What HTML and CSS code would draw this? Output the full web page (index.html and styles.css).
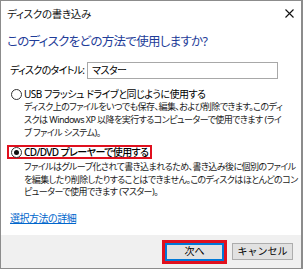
FILE: index.html
```html
<!DOCTYPE html>
<html lang="ja">
<head>
<meta charset="utf-8">
<link rel="stylesheet" href="styles.css">
</head>
<body>
<div class="window">
  <div class="titlebar">
    <span class="title">ディスクの書き込み</span>
    <svg class="close" width="9" height="9" viewBox="0 0 9 9"><path d="M0.5 0.5 L8.5 8.5 M8.5 0.5 L0.5 8.5" stroke="#111" stroke-width="1.1" fill="none"/></svg>
  </div>
  <div class="content">
    <h1 class="heading">このディスクをどの方法で使用しますか?</h1>
    <div class="title-row">
      <span class="field-label">ディスクのタイトル:</span>
      <div class="field">マスター</div>
    </div>
    <div class="option">
      <div class="option-head">
        <span class="radio"></span>
        <span class="option-label usb">USB フラッシュ ドライブと同じように使用する</span>
      </div>
      <p class="desc">ディスク上のファイルをいつでも保存、編集、および削除できます。このディ<br>スクは Windows XP 以降を実行するコンピューターで使用できます (ライ<br>ブ ファイル システム)。</p>
    </div>
    <div class="option option-second">
      <div class="option-head selected">
        <span class="radio checked"></span>
        <span class="option-label cd">CD/DVD プレーヤーで使用する</span>
      </div>
      <p class="desc desc-second">ファイルはグループ化されて書き込まれるため、書き込み後に個別のファイル<br>を編集したり削除したりすることはできません。このディスクはほとんどのコン<br>ピューターで使用できます (マスター)。</p>
    </div>
    <a class="link" href="#">選択方法の詳細</a>
  </div>
  <div class="footer">
    <div class="highlight"><button class="btn primary">次へ</button></div>
    <button class="btn cancel">キャンセル</button>
  </div>
</div>
</body>
</html>
```
FILE: styles.css
```css
html, body {
  margin: 0;
  padding: 0;
  background: #fff;
}
body {
  font-family: "Noto Sans", "Noto Sans CJK JP", sans-serif;
  font-feature-settings: "palt";
  color: #000;
  font-size: 10px;
  line-height: 13px;
}
.window {
  width: 303px;
  height: 269px;
  box-sizing: border-box;
  border: 1px solid #8c8c8c;
  border-right-width: 2px;
  display: flex;
  flex-direction: column;
  background: #fff;
  overflow: hidden;
}
.titlebar {
  height: 26px;
  flex: none;
  display: flex;
  align-items: center;
  justify-content: space-between;
  padding: 0 7px 0 6px;
}
.title {
  font-size: 10.5px;
  line-height: 26px;
  letter-spacing: -0.3px;
  color: #111;
}
.close {
  display: block;
  margin-top: -1px;
}
.content {
  flex: 1;
  min-height: 0;
  padding: 0 0 0 6px;
}
.heading {
  margin: 6px 0 0 0;
  font-size: 12.5px;
  font-weight: normal;
  line-height: 18px;
  letter-spacing: -0.7px;
  color: #1f3d99;
  white-space: nowrap;
}
.title-row {
  display: flex;
  align-items: center;
  margin-top: 11px;
  padding-left: 3px;
}
.field-label {
  width: 77px;
  font-size: 10px;
  line-height: 17px;
  letter-spacing: -0.7px;
  white-space: nowrap;
}
.field {
  width: 191px;
  height: 17px;
  box-sizing: border-box;
  border: 1px solid #a8a8a8;
  font-size: 10px;
  line-height: 15px;
  letter-spacing: -0.5px;
  padding-left: 4px;
}
.option {
  margin-top: 8px;
}
.option-second {
  margin-top: 6px;
}
.option-head {
  display: flex;
  width: fit-content;
  align-items: center;
  gap: 2px;
  border: 2px solid transparent;
  padding: 0 2px;
  line-height: 11px;
  height: 11px;
}
.option-head.selected {
  border-color: #e0101e;
  height: 10px;
}
.radio {
  flex: none;
  width: 11px;
  height: 11px;
  box-sizing: border-box;
  border: 1px solid #333;
  border-radius: 50%;
  background: #fff;
  display: flex;
  align-items: center;
  justify-content: center;
}
.radio.checked::after {
  content: "";
  width: 5px;
  height: 5px;
  border-radius: 50%;
  background: #111;
}
.option-label {
  font-size: 10px;
  white-space: nowrap;
}
.option-label.usb {
  letter-spacing: -0.5px;
}
.option-label.cd {
  font-weight: 500;
  letter-spacing: -0.6px;
}
.desc {
  margin: -2px 0 0 17px;
  font-size: 9px;
  line-height: 13px;
  letter-spacing: -0.55px;
  color: #1a1a1a;
  white-space: nowrap;
}
.desc-second {
  margin-top: 2px;
  line-height: 12.5px;
}
.link {
  display: inline-block;
  margin: 13px 0 0 3px;
  font-size: 10px;
  line-height: 13px;
  letter-spacing: -0.5px;
  color: #0066cc;
  text-decoration: underline;
}
.footer {
  height: 33px;
  flex: none;
  background: #f0f0f0;
  display: flex;
  align-items: center;
  justify-content: flex-end;
  gap: 5px;
  padding-right: 8px;
}
.highlight {
  border: 3px solid #e0101e;
  display: flex;
}
.btn {
  margin: 0;
  font-family: inherit;
  font-size: 10px;
  height: 17px;
  line-height: 15px;
  padding: 0;
  background: #e1e1e1;
  color: #000;
  border: 1px solid #adadad;
}
.btn.primary {
  width: 59px;
  height: 18px;
  border: 1px solid #0078d7;
  box-shadow: inset 0 0 0 1px #0078d7;
}
.btn.cancel {
  width: 61px;
}
```
